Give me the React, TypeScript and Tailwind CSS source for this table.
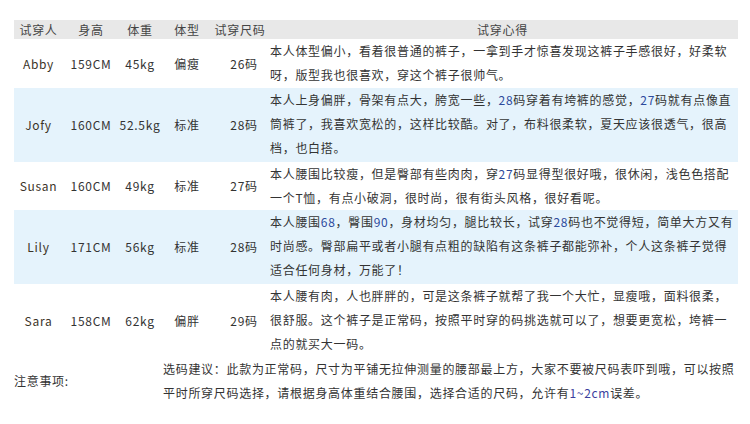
import type { ReactNode } from 'react'

// 试穿报告表格
interface Row {
  name: string
  height: string
  weight: string
  shape: string
  size: string
  lines: ReactNode[]
  rowH: string
  blue: boolean
}

const N = ({ children }: { children: ReactNode }) => <span className="text-[#2d4a9c]">{children}</span>

const rows: Row[] = [
  {
    name: 'Abby',
    height: '159CM',
    weight: '45kg',
    shape: '偏瘦',
    size: '26码',
    rowH: 'h-[49px]',
    blue: false,
    lines: [
      '本人体型偏小，看着很普通的裤子，一拿到手才惊喜发现这裤子手感很好，好柔软',
      '呀，版型我也很喜欢，穿这个裤子很帅气。',
    ],
  },
  {
    name: 'Jofy',
    height: '160CM',
    weight: '52.5kg',
    shape: '标准',
    size: '28码',
    rowH: 'h-[74px]',
    blue: true,
    lines: [
      <>本人上身偏胖，骨架有点大，胯宽一些，<N>28</N>码穿着有垮裤的感觉，<N>27</N>码就有点像直</>,
      '筒裤了，我喜欢宽松的，这样比较酷。对了，布料很柔软，夏天应该很透气，很高',
      '档，也白搭。',
    ],
  },
  {
    name: 'Susan',
    height: '160CM',
    weight: '49kg',
    shape: '标准',
    size: '27码',
    rowH: 'h-[48px]',
    blue: false,
    lines: [
      <>本人腰围比较瘦，但是臀部有些肉肉，穿<N>27</N>码显得型很好哦，很休闲，浅色色搭配</>,
      '一个T恤，有点小破洞，很时尚，很有街头风格，很好看呢。',
    ],
  },
  {
    name: 'Lily',
    height: '171CM',
    weight: '56kg',
    shape: '标准',
    size: '28码',
    rowH: 'h-[74px]',
    blue: true,
    lines: [
      <>本人腰围<N>68</N>，臀围<N>90</N>，身材均匀，腿比较长，试穿<N>28</N>码也不觉得短，简单大方又有</>,
      '时尚感。臀部扁平或者小腿有点粗的缺陷有这条裤子都能弥补，个人这条裤子觉得',
      '适合任何身材，万能了！',
    ],
  },
  {
    name: 'Sara',
    height: '158CM',
    weight: '62kg',
    shape: '偏胖',
    size: '29码',
    rowH: 'h-[74px]',
    blue: false,
    lines: [
      '本人腰有肉，人也胖胖的，可是这条裤子就帮了我一个大忙，显瘦哦，面料很柔，',
      '很舒服。这个裤子是正常码，按照平时穿的码挑选就可以了，想要更宽松，垮裤一',
      '点的就买大一码。',
    ],
  },
]

const cols = 'grid grid-cols-[49px_56px_42px_52px_54px_471px]'

export default function App() {
  return (
    <div
      className="h-[424px] w-[750px] overflow-hidden bg-white pl-[14px] pt-[20px] text-[12px] tracking-[0.7px] text-[#333]"
      style={{ fontFamily: '"Noto Sans CJK SC", sans-serif' }}
    >
      <div className="w-[724px]">
        <div className={`${cols} h-[19px] items-center bg-[#e8e8e8] text-center leading-[19px] text-[#444]`}>
          <div>试穿人</div>
          <div>身高</div>
          <div>体重</div>
          <div>体型</div>
          <div>试穿尺码</div>
          <div>试穿心得</div>
        </div>
        {rows.map((r) => (
          <div key={r.name} className={`${cols} ${r.rowH} items-center ${r.blue ? 'bg-[#e5f3fc]' : 'bg-white'}`}>
            <div className="text-center text-[#3c3428]">{r.name}</div>
            <div className="text-center">{r.height}</div>
            <div className="text-center">{r.weight}</div>
            <div className="text-center">{r.shape}</div>
            <div className="pl-[8px] text-center">{r.size}</div>
            <div className="self-start whitespace-nowrap pl-[3px] leading-[24px]">
              {r.lines.map((l, i) => (
                <div key={i}>{l}</div>
              ))}
            </div>
          </div>
        ))}
        <div className="mt-[-1px] grid h-[48px] grid-cols-[149px_1fr] items-center">
          <div>注意事项:</div>
          <div className="self-start whitespace-nowrap leading-[24px]">
            <div>选码建议：此款为正常码，尺寸为平铺无拉伸测量的腰部最上方，大家不要被尺码表吓到哦，可以按照</div>
            <div>
              平时所穿尺码选择，请根据身高体重结合腰围，选择合适的尺码，允许有<span className="text-[#3b3f9e]">1~2cm</span>误差。
            </div>
          </div>
        </div>
      </div>
    </div>
  )
}
